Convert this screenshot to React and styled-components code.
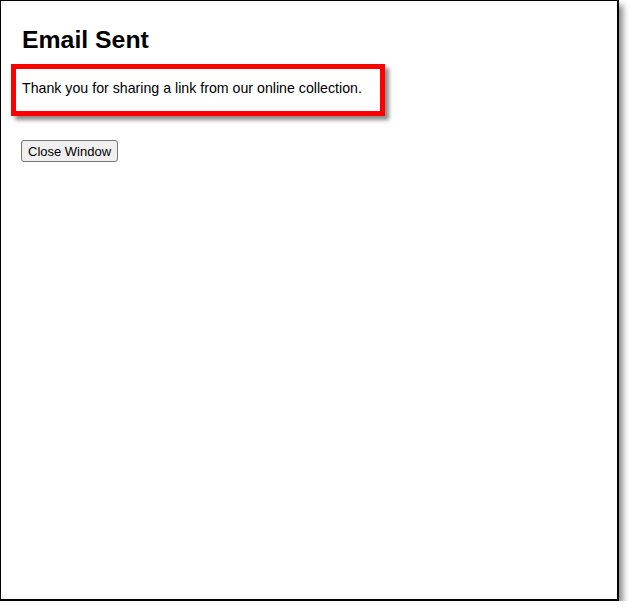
import React from 'react';
import styled, { createGlobalStyle } from 'styled-components'

const GlobalStyle = createGlobalStyle`
  html, body {
    margin: 0;
    padding: 0;
    background: #fff;
  }
`

const Frame = styled.div`
  box-sizing: border-box;
  width: 619px;
  height: 601px;
  border: 1px solid #000;
  border-right-width: 2px;
  border-bottom-width: 2px;
  background: #fff;
  box-shadow: 4px 5px 6px rgba(0, 0, 0, 0.45);
  padding: 0 20px;
  display: flex;
  flex-direction: column;
  align-items: flex-start;
  font-family: "Liberation Sans", Arial, sans-serif;
  color: #000;
`

const Title = styled.h2`
  font-size: 24.8px;
  font-weight: bold;
  line-height: 28px;
  margin: 25px 0 10px 1px;
`

const Callout = styled.div`
  box-sizing: border-box;
  width: 374px;
  height: 52px;
  margin-left: -10px;
  border: 5px solid #ff0000;
  box-shadow: 4px 4px 4px rgba(0, 0, 0, 0.45);
  padding: 11px 0 0 6px;
`

const Message = styled.p`
  margin: 0;
  font-size: 14.2px;
  line-height: 17px;
`

const Button = styled.button`
  margin-top: 24px;
  font-family: "Liberation Sans", Arial, sans-serif;
  font-size: 13px;
  height: 22px;
  padding: 1px 6px;
  background: #efefef;
  color: #000;
  border: 1px solid #767676;
  border-radius: 3px;
`

function App() {
  return (
    <>
      <GlobalStyle />
      <Frame>
        <Title>Email Sent</Title>
        <Callout>
          <Message>Thank you for sharing a link from our online collection.</Message>
        </Callout>
        <Button type="button">Close Window</Button>
      </Frame>
    </>
  )
}

export default App;
